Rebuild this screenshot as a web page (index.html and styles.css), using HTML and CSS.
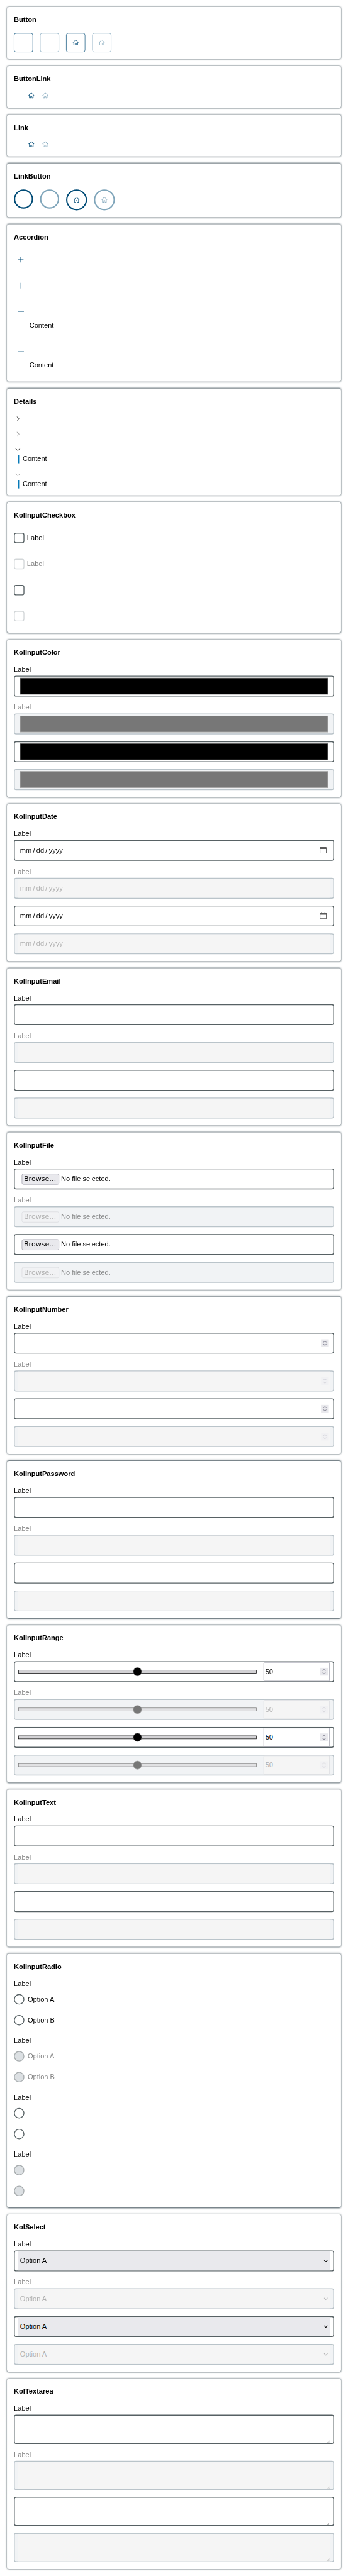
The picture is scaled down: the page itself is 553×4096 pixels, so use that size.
FILE: index.html
```html
<!DOCTYPE html>
<html lang="en">
<head>
<meta charset="utf-8">
<title>Components</title>
<link rel="stylesheet" href="styles.css">
</head>
<body>
<svg class="sprite" aria-hidden="true">
  <symbol id="home" viewBox="0 0 16 16"><path d="M8.36 1.37l6.36 5.8-.71.71L13 6.964v6.526l-.5.5h-3l-.5-.5v-3.5H7v3.5l-.5.5h-3l-.5-.5V6.972L2 7.88l-.71-.71 6.35-5.8h.72zM4 6.063v6.927h2v-3.5l.5-.5h3l.5.5v3.5h2V6.057L8 2.43 4 6.063z"/></symbol>
  <symbol id="plus" viewBox="0 0 16 16"><path d="M14 7v1H8v6H7V8H1V7h6V1h1v6h6z"/></symbol>
  <symbol id="minus" viewBox="0 0 16 16"><path d="M15 7v1H1V7z"/></symbol>
  <symbol id="right" viewBox="0 0 16 16"><path d="M10.072 8.024L5.715 3.667l.618-.62L11 7.716v.618L6.333 13l-.618-.619 4.357-4.357z"/></symbol>
  <symbol id="down" viewBox="0 0 16 16"><path d="M7.976 10.072l4.357-4.357.62.618L8.284 11h-.618L3 6.333l.619-.618 4.357 4.357z"/></symbol>
  <symbol id="calendar" viewBox="0 0 16 16"><path fill-rule="evenodd" d="M3 0h2v1.500h6V0h2v1.500h1a2 2 0 0 1 2 2V14a2 2 0 0 1-2 2H2a2 2 0 0 1-2-2V3.500a2 2 0 0 1 2-2h1zM1.500 6v8q0 .5.5.5h12q.5 0 .5-.5V6z"/></symbol>
  <symbol id="spin" viewBox="0 0 18 18"><path d="M5.700 7 9 3.900 12.300 7M5.700 11 9 14.100 12.300 11" fill="none" stroke="currentColor" stroke-width="1.600"/></symbol>
  <symbol id="caret" viewBox="0 0 10 6"><path d="M1 1l4 4 4-4" fill="none" stroke="currentColor" stroke-width="1.500"/></symbol>
  <symbol id="grip" viewBox="0 0 6 6"><path d="M0 6 6 0M3 6 6 3" fill="none" stroke="currentColor"/></symbol>
</svg>
<div class="window">
<main class="page">
  <section class="card">
    <h2>Button</h2>
    <div class="row">
      <button class="btn"></button>
      <button class="btn off"></button>
      <button class="btn"><svg class="icon"><use href="#home"/></svg></button>
      <button class="btn off"><svg class="icon"><use href="#home"/></svg></button>
    </div>
  </section>
  <section class="card">
    <h2>ButtonLink</h2>
    <div class="links"><svg class="icon"><use href="#home"/></svg><svg class="icon off"><use href="#home"/></svg></div>
  </section>
  <section class="card">
    <h2>Link</h2>
    <div class="links"><svg class="icon"><use href="#home"/></svg><svg class="icon off"><use href="#home"/></svg></div>
  </section>
  <section class="card">
    <h2>LinkButton</h2>
    <div class="row">
      <a class="btn round"></a>
      <a class="btn round off"></a>
      <a class="btn round large"><svg class="icon"><use href="#home"/></svg></a>
      <a class="btn round large off"><svg class="icon"><use href="#home"/></svg></a>
    </div>
  </section>
  <section class="card">
    <h2>Accordion</h2>
    <div class="stack">
      <div class="acc-head"><svg class="icon"><use href="#plus"/></svg></div>
      <div class="acc-head off"><svg class="icon"><use href="#plus"/></svg></div>
      <div><div class="acc-head"><svg class="icon"><use href="#minus"/></svg></div><p class="acc-body">Content</p></div>
      <div><div class="acc-head off"><svg class="icon"><use href="#minus"/></svg></div><p class="acc-body">Content</p></div>
    </div>
  </section>
  <section class="card">
    <h2>Details</h2>
    <div class="stack">
      <div class="det-head"><svg><use href="#right"/></svg></div>
      <div class="det-head off"><svg><use href="#right"/></svg></div>
      <div><div class="det-head"><svg><use href="#down"/></svg></div><p class="det-body">Content</p></div>
      <div><div class="det-head off"><svg><use href="#down"/></svg></div><p class="det-body">Content</p></div>
    </div>
  </section>
  <section class="card">
    <h2>KolInputCheckbox</h2>
    <div class="checks">
      <label class="check"><i></i>Label</label>
      <label class="check off"><i></i>Label</label>
      <label class="check"><i></i></label>
      <label class="check off"><i></i></label>
    </div>
  </section>
  <section class="card">
    <h2>KolInputColor</h2>
    <div class="stack">
      <div><label>Label</label><div class="field"><div class="inner color"></div></div></div>
      <div class="off"><label>Label</label><div class="field"><div class="inner color"></div></div></div>
      <div class="field"><div class="inner color"></div></div>
      <div class="off"><div class="field"><div class="inner color"></div></div></div>
    </div>
  </section>
  <section class="card">
    <h2>KolInputDate</h2>
    <div class="stack">
      <div><label>Label</label><div class="field"><div class="inner date"><span>mm / dd / yyyy</span><svg><use href="#calendar"/></svg></div></div></div>
      <div class="off"><label>Label</label><div class="field"><div class="inner date"><span>mm / dd / yyyy</span></div></div></div>
      <div class="field"><div class="inner date"><span>mm / dd / yyyy</span><svg><use href="#calendar"/></svg></div></div>
      <div class="off"><div class="field"><div class="inner date"><span>mm / dd / yyyy</span></div></div></div>
    </div>
  </section>
  <section class="card">
    <h2>KolInputEmail</h2>
    <div class="stack">
      <div><label>Label</label><div class="field"><div class="inner"></div></div></div>
      <div class="off"><label>Label</label><div class="field"><div class="inner"></div></div></div>
      <div class="field"><div class="inner"></div></div>
      <div class="off"><div class="field"><div class="inner"></div></div></div>
    </div>
  </section>
  <section class="card">
    <h2>KolInputFile</h2>
    <div class="stack">
      <div><label>Label</label><div class="field"><div class="inner file"><span class="browse">Browse…</span><span>No file selected.</span></div></div></div>
      <div class="off"><label>Label</label><div class="field"><div class="inner file"><span class="browse">Browse…</span><span>No file selected.</span></div></div></div>
      <div class="field"><div class="inner file"><span class="browse">Browse…</span><span>No file selected.</span></div></div>
      <div class="off"><div class="field"><div class="inner file"><span class="browse">Browse…</span><span>No file selected.</span></div></div></div>
    </div>
  </section>
  <section class="card">
    <h2>KolInputNumber</h2>
    <div class="stack">
      <div><label>Label</label><div class="field"><div class="inner number"><svg class="spin"><use href="#spin"/></svg></div></div></div>
      <div class="off"><label>Label</label><div class="field"><div class="inner number"><svg class="spin"><use href="#spin"/></svg></div></div></div>
      <div class="field"><div class="inner number"><svg class="spin"><use href="#spin"/></svg></div></div>
      <div class="off"><div class="field"><div class="inner number"><svg class="spin"><use href="#spin"/></svg></div></div></div>
    </div>
  </section>
  <section class="card">
    <h2>KolInputPassword</h2>
    <div class="stack">
      <div><label>Label</label><div class="field"><div class="inner"></div></div></div>
      <div class="off"><label>Label</label><div class="field"><div class="inner"></div></div></div>
      <div class="field"><div class="inner"></div></div>
      <div class="off"><div class="field"><div class="inner"></div></div></div>
    </div>
  </section>
  <section class="card">
    <h2>KolInputRange</h2>
    <div class="stack">
      <div><label>Label</label><div class="field"><div class="inner range"><div class="track"><i class="thumb"></i></div><div class="value"><span>50</span><svg class="spin"><use href="#spin"/></svg></div></div></div></div>
      <div class="off"><label>Label</label><div class="field"><div class="inner range"><div class="track"><i class="thumb"></i></div><div class="value"><span>50</span><svg class="spin"><use href="#spin"/></svg></div></div></div></div>
      <div class="field"><div class="inner range"><div class="track"><i class="thumb"></i></div><div class="value"><span>50</span><svg class="spin"><use href="#spin"/></svg></div></div></div>
      <div class="off"><div class="field"><div class="inner range"><div class="track"><i class="thumb"></i></div><div class="value"><span>50</span><svg class="spin"><use href="#spin"/></svg></div></div></div></div>
    </div>
  </section>
  <section class="card">
    <h2>KolInputText</h2>
    <div class="stack">
      <div><label>Label</label><div class="field"><div class="inner"></div></div></div>
      <div class="off"><label>Label</label><div class="field"><div class="inner"></div></div></div>
      <div class="field"><div class="inner"></div></div>
      <div class="off"><div class="field"><div class="inner"></div></div></div>
    </div>
  </section>
  <section class="card radio-card">
    <h2>KolInputRadio</h2>
    <div class="group"><p>Label</p><label class="radio"><i></i>Option A</label><label class="radio"><i></i>Option B</label></div>
    <div class="group"><p>Label</p><label class="radio off"><i></i>Option A</label><label class="radio off"><i></i>Option B</label></div>
    <div class="group"><p>Label</p><label class="radio"><i></i></label><label class="radio"><i></i></label></div>
    <div class="group"><p>Label</p><label class="radio off"><i></i></label><label class="radio off"><i></i></label></div>
  </section>
  <section class="card">
    <h2>KolSelect</h2>
    <div class="stack">
      <div><label>Label</label><div class="field"><div class="inner select"><span>Option A</span><svg><use href="#caret"/></svg></div></div></div>
      <div class="off"><label>Label</label><div class="field"><div class="inner select"><span>Option A</span><svg><use href="#caret"/></svg></div></div></div>
      <div class="field"><div class="inner select"><span>Option A</span><svg><use href="#caret"/></svg></div></div>
      <div class="off"><div class="field"><div class="inner select"><span>Option A</span><svg><use href="#caret"/></svg></div></div></div>
    </div>
  </section>
  <section class="card">
    <h2>KolTextarea</h2>
    <div class="stack">
      <div><label>Label</label><div class="field tall"><div class="inner area"><svg><use href="#grip"/></svg></div></div></div>
      <div class="off"><label>Label</label><div class="field tall"><div class="inner area"><svg><use href="#grip"/></svg></div></div></div>
      <div class="field tall"><div class="inner area"><svg><use href="#grip"/></svg></div></div>
      <div class="off"><div class="field tall"><div class="inner area"><svg><use href="#grip"/></svg></div></div></div>
    </div>
  </section>
</main>
</div>
</body>
</html>
```

FILE: styles.css
```css
* { box-sizing: border-box; }

body { margin: 0; background: #fff; }

.window {
  width: 553px;
  height: 4096px;
  overflow: hidden;
}

.sprite { display: none; }

/* The sheet is laid out 800px wide and scaled to the window. */
.page {
  display: flex;
  flex-direction: column;
  gap: 16px;
  width: 800px;
  height: 5928px;
  padding: 16px;
  transform: scale(0.69125, 0.69095);
  transform-origin: 0 0;
  font: 16px/18px "Liberation Sans", Arial, sans-serif;
  color: #000;
}

p { margin: 0; }
svg { display: block; fill: currentColor; flex: none; }

.card {
  padding: 16px;
  border-radius: 5px;
  background: #fff;
  box-shadow: 0 0 4px #374851;
}

h2 {
  height: 44px;
  margin: 0;
  padding-top: 5px;
  font-size: 16px;
  line-height: 18px;
  font-weight: 700;
}

.row { display: flex; gap: 16px; align-items: flex-start; }
.icon { width: 16px; height: 16px; }

.btn {
  display: flex;
  align-items: center;
  justify-content: center;
  width: 44px;
  height: 44px;
  padding: 0;
  border: 1px solid #004b76;
  border-radius: 5px;
  background: #fff;
  color: #004b76;
}
.btn.off { border-color: #7fa5ba; color: #7fa5ba; }
.btn.round { border-width: 3px; border-radius: 50%; }
.large { width: 48px; height: 48px; }

.links { display: flex; gap: 16px; padding: 0 0 4px 32px; color: #004b76; }
.links .off { color: #7fa5ba; }

.stack { display: flex; flex-direction: column; gap: 16px; }

.acc-head { display: flex; align-items: center; height: 44px; padding-left: 8px; color: #004b76; }
.acc-head.off { color: #7fa5ba; }
.acc-body { padding: 0 0 13px 35.500px; }

.det-head { display: flex; align-items: center; height: 19px; color: #202020; }
.det-head.off { color: #8f8f8f; }
.det-head svg { width: 18px; height: 18px; }
.det-body { height: 19px; margin: 4px 0 0 10px; padding-left: 8px; border-left: 2px solid #0077b6; }

.checks { display: flex; flex-direction: column; gap: 36px; padding: 10px 0; }
.check { display: flex; align-items: center; gap: 6px; height: 24px; }
.check i { width: 24px; height: 24px; border: 2px solid #576164; border-radius: 5px; }
.check.off { color: #858585; }
.check.off i { border-color: #d3d7d9; }

.stack label { display: block; height: 23px; }
.off label { color: #858585; }

.field {
  height: 48px;
  padding: 0 8px;
  border: 2px solid #576164;
  border-radius: 5px;
  background: #fff;
}
.off .field { border-color: #bac4ca; background: #f1f3f5; }
.field.tall { height: 67px; }

.inner { display: flex; align-items: center; justify-content: space-between; height: 100%; }
.off .inner { background: #f5f5f5; color: #b0b0b0; }

.inner.color { padding: 4px; }
.inner.color::before { content: ""; flex: 1; height: 36px; border: 1px solid #777; background: #000; }
.off .inner.color { background: none; }
.off .inner.color::before { border-color: #acacac; background: #777; }

.date { padding: 0 7px 0 4px; word-spacing: -1.200px; }
.date svg { width: 16px; height: 16px; margin-top: -2px; color: #5b5b5b; }

.inner.file { justify-content: flex-start; gap: 4.500px; padding-left: 8px; }
.off .inner.file { background: none; color: #8a8b8c; }
.browse {
  width: 86px;
  height: 25px;
  padding-left: 4px;
  border: 1px solid #8f8f9d;
  border-radius: 4px;
  background: #e9e9ed;
  font: 16px/22px "DejaVu Sans", sans-serif;
}
.off .browse { border-color: #d6d7dc; background: #f1f2f4; color: #b0b0b0; }

.spin { width: 18px; height: 18px; background: #e9e9ed; color: #8f8f9d; }
.off .spin { background: #f1f1f3; color: #d8d8de; }
.inner.number { justify-content: flex-end; padding-right: 2px; }

.off .inner.range { background: none; }
.track {
  position: relative;
  width: 548px;
  height: 8px;
  border: 1px solid #000;
  background: #d3d2d5;
}
.thumb {
  position: absolute;
  left: 50%;
  top: 50%;
  width: 20px;
  height: 20px;
  border: 1px solid #666;
  border-radius: 50%;
  background: #000;
  transform: translate(-50%, -50%);
}
.off .track { border-color: #777; background: #e1e1e3; }
.off .thumb { border-color: #a0a0a0; background: #777; }
.value {
  display: flex;
  align-items: center;
  justify-content: space-between;
  width: 152px;
  height: 44px;
  padding: 0 3px;
  border: 1px solid #8f8f9d;
  border-radius: 2px;
  background: #fff;
}
.off .value { border-color: #d6d7dc; background: #f5f5f5; }

.radio-card { padding-bottom: 0; }
.group { height: 131px; }
.group p { height: 33px; }
.radio { display: flex; align-items: center; gap: 7.500px; height: 24px; margin-bottom: 24px; line-height: 20px; }
.radio i { width: 24px; height: 24px; border: 2px solid #576164; border-radius: 50%; }
.radio.off { color: #858585; }
.radio.off i { border-color: #a7acae; background: #dce0e3; }

.select { padding: 0 4px; background: #e9e9ed; }
.select svg { width: 10px; height: 6px; }

.area { align-items: flex-end; justify-content: flex-end; color: #999; }
.area svg { width: 6px; height: 6px; }
```
